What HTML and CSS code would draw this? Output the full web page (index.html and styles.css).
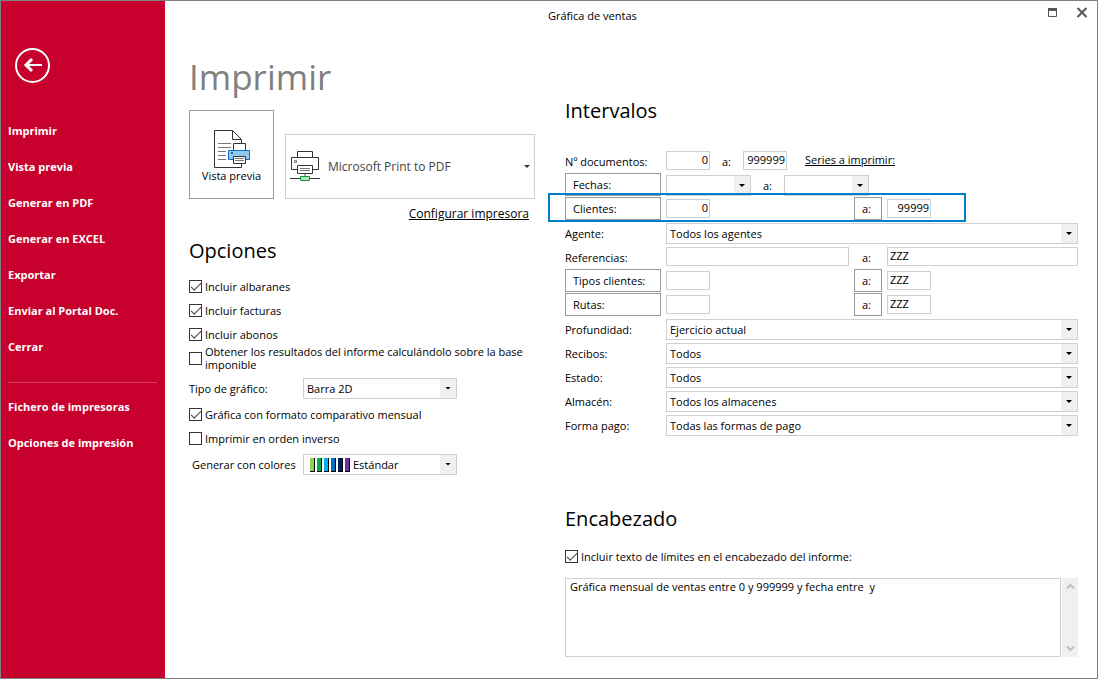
FILE: index.html
```html
<!DOCTYPE html>
<html lang="es">
<head>
<meta charset="utf-8">
<meta name="viewport" content="width=device-width, initial-scale=1">
<title>Gráfica de ventas</title>
<link rel="stylesheet" href="styles.css">
</head>
<body>
<div class="window">
  <nav class="sidebar" aria-label="Acciones">
    <button class="back" type="button" aria-label="Volver">
      <svg width="36" height="36" viewBox="0 0 36 36" fill="none" stroke="#fff"><circle cx="17.5" cy="18.5" r="16.5" stroke-width="2"/><path d="M27 18H11" stroke-width="2"/><path d="M17 12L11 18L17 24" stroke-width="3"/></svg>
    </button>
    <ul class="menu">
      <li><a href="#">Imprimir</a></li>
      <li><a href="#">Vista previa</a></li>
      <li><a href="#">Generar en PDF</a></li>
      <li><a href="#">Generar en EXCEL</a></li>
      <li><a href="#">Exportar</a></li>
      <li><a href="#">Enviar al Portal Doc.</a></li>
      <li><a href="#">Cerrar</a></li>
    </ul>
    <hr class="divider">
    <ul class="menu">
      <li><a href="#">Fichero de impresoras</a></li>
      <li><a href="#">Opciones de impresión</a></li>
    </ul>
  </nav>
  <main class="main">
    <header class="titlebar">
      <span class="caption">Gráfica de ventas</span>
      <button class="winbtn" type="button" aria-label="Maximizar"><svg width="12" height="12" viewBox="0 0 12 12"><path d="M2.500 2.500H10.500V9.500H2.500Z" fill="none" stroke="#555"/><path d="M2 1H11V4H2Z" fill="#555"/></svg></button>
      <button class="winbtn" type="button" aria-label="Cerrar ventana"><svg width="12" height="12" viewBox="0 0 12 12"><path d="M1.500 1L10.500 10M10.500 1L1.500 10" stroke="#555" stroke-width="2"/></svg></button>
    </header>
    <div class="columns">
      <div class="left">
        <h1>Imprimir</h1>
        <div class="print">
          <button class="preview" type="button">
            <svg width="36" height="38" viewBox="0 0 36 38" fill="none"><path d="M19 .5H.5V37.500H27.500V9.500L18.500 .5V9.500H27.500" stroke="#333" stroke-width="1"/><path d="M4 13.500H17M4 17.500H17M4 21.500H12M4 25.500H12M4 29.500H12" stroke="#777"/><path d="M19.500 20V13.500H31.500V20" fill="#fff" stroke="#333"/><path d="M14.500 20.500H35.500V29.500H14.500Z" fill="#92c9f0" stroke="#0f6cbd"/><path d="M17 22H19V24H17Z" fill="#0f6cbd"/><path d="M19.500 26.500H31.500V33.500H19.500Z" fill="#fff" stroke="#333"/><path d="M21 28.500H30M21 30.500H30" stroke="#777"/></svg>
            <span>Vista previa</span>
          </button>
          <span class="drop printer">
            <svg class="printer-icon" width="30" height="31" viewBox="0 0 30 31" fill="none"><path d="M7.500 6V.5H22.500V6" stroke="#333"/><path d="M7 18.500H1.500V6.500H28.500V18.500H23" stroke="#333"/><path d="M4.500 9.500H6.500V11.500H4.500Z" stroke="#777"/><path d="M7.500 14.500H22.500V22.500H7.500Z" stroke="#333"/><path d="M10 17.500H20M10 19.500H20" stroke="#777"/><path d="M15 23V25" stroke="#aaa" stroke-width="2"/><path d="M0 27.500H30" stroke="#333"/><path d="M10.500 25.500H19.500V29.500H10.500Z" fill="#b5e2b8" stroke="#0c9a3e"/></svg>
            <select aria-label="Impresora"><option>Microsoft Print to PDF</option></select>
          </span>
        </div>
        <a class="configure" href="#">Configurar impresora</a>
        <h2>Opciones</h2>
        <div class="options">
          <label class="check"><input type="checkbox" checked><span>Incluir albaranes</span></label>
          <label class="check"><input type="checkbox" checked><span>Incluir facturas</span></label>
          <label class="check"><input type="checkbox" checked><span>Incluir abonos</span></label>
          <label class="check"><input type="checkbox"><span>Obtener los resultados del informe calculándolo sobre la base imponible</span></label>
          <div class="choice spaced"><label for="tipo">Tipo de gráfico:</label><span class="drop"><select id="tipo"><option>Barra 2D</option></select></span></div>
          <label class="check"><input type="checkbox" checked><span>Gráfica con formato comparativo mensual</span></label>
          <label class="check"><input type="checkbox"><span>Imprimir en orden inverso</span></label>
          <div class="choice"><label class="inset" for="colores">Generar con colores</label><span class="drop colours">
            <svg class="swatches" width="41" height="15" viewBox="0 0 41 15"><path d="M1 1h5v14h-5zM8 1h5v14h-5zM15 1h5v14h-5zM22 1h5v14h-5zM29 1h5v14h-5zM36 1h5v14h-5z" fill="#000"/><path d="M1 1h4v13h-4z" fill="#92d050"/><path d="M8 1h4v13h-4z" fill="#00b050"/><path d="M15 1h4v13h-4z" fill="#00b0f0"/><path d="M22 1h4v13h-4z" fill="#0070c0"/><path d="M29 1h4v13h-4z" fill="#002060"/><path d="M36 1h4v13h-4z" fill="#7030a0"/></svg>
            <select id="colores"><option>Estándar</option></select></span></div>
        </div>
      </div>
      <div class="right">
        <h2>Intervalos</h2>
        <div class="ranges">
          <div class="line"><label for="doc1">Nº documentos:</label><input class="short num" id="doc1" value="0"><label class="to" for="doc2">a:</label><input class="short num" id="doc2" value="999999"><a class="series" href="#">Series a imprimir:</a></div>
          <div class="line"><button class="pick" type="button">Fechas:</button><span class="drop date"><select aria-label="Fecha inicial"><option></option></select></span><label class="to" for="fecha2">a:</label><span class="drop date"><select id="fecha2"><option></option></select></span></div>
          <div class="row highlight"><button class="pick" type="button">Clientes:</button><input class="short num" aria-label="Cliente inicial" value="0"><button class="pick until" type="button">a:</button><input class="short num" aria-label="Cliente final" value="99999"></div>
          <div class="row"><label for="agente">Agente:</label><span class="drop wide"><select id="agente"><option>Todos los agentes</option></select></span></div>
          <div class="row"><label for="ref1">Referencias:</label><input id="ref1"><label class="until" for="ref2">a:</label><input id="ref2" value="ZZZ"></div>
          <div class="row"><button class="pick" type="button">Tipos clientes:</button><input class="short" aria-label="Tipo inicial"><button class="pick until" type="button">a:</button><input class="short" aria-label="Tipo final" value="ZZZ"></div>
          <div class="row"><button class="pick" type="button">Rutas:</button><input class="short" aria-label="Ruta inicial"><button class="pick until" type="button">a:</button><input class="short" aria-label="Ruta final" value="ZZZ"></div>
          <div class="row"><label for="prof">Profundidad:</label><span class="drop wide"><select id="prof"><option>Ejercicio actual</option></select></span></div>
          <div class="row"><label for="rec">Recibos:</label><span class="drop wide"><select id="rec"><option>Todos</option></select></span></div>
          <div class="row"><label for="est">Estado:</label><span class="drop wide"><select id="est"><option>Todos</option></select></span></div>
          <div class="row"><label for="alm">Almacén:</label><span class="drop wide"><select id="alm"><option>Todos los almacenes</option></select></span></div>
          <div class="row"><label for="pago">Forma pago:</label><span class="drop wide"><select id="pago"><option>Todas las formas de pago</option></select></span></div>
        </div>
        <h2>Encabezado</h2>
        <label class="check"><input type="checkbox" checked><span>Incluir texto de límites en el encabezado del informe:</span></label>
        <div class="memo">
          <textarea aria-label="Texto del encabezado">Gráfica mensual de ventas entre 0 y 999999 y fecha entre  y</textarea>
          <div class="scroll">
            <svg width="9" height="7" viewBox="0 0 9 7" fill="none" stroke="#bfbfbf" stroke-width="2"><path d="M1 5.500L4.500 2L8 5.500"/></svg>
            <svg width="9" height="7" viewBox="0 0 9 7" fill="none" stroke="#bfbfbf" stroke-width="2"><path d="M1 1.500L4.500 5L8 1.500"/></svg>
          </div>
        </div>
      </div>
    </div>
  </main>
</div>
</body>
</html>
```
FILE: styles.css
```css
*, *::before, *::after { box-sizing: border-box; }
body, button, input, select, textarea {
  font-family: "Open Sans", "Noto Sans", sans-serif;
  font-size: 11px;
  color: #000;
}
body { margin: 0; background: #fff; line-height: 13px; }
button, input, select, textarea { margin: 0; border-radius: 0; }
a { color: inherit; }
svg { display: block; }

.window { display: flex; min-height: 100vh; border: 1px solid #808080; }

.sidebar { flex: none; width: 164px; padding: 46px 8px 0 7px; background: #c8002d; color: #fff; }
.back { display: block; margin: 0 0 30px 7px; padding: 0; border: 0; background: none; }
.menu { margin: 0; padding: 0; list-style: none; font-weight: 700; }
.menu a { display: block; line-height: 36px; text-decoration: none; white-space: nowrap; }
.divider { height: 1px; margin: 17px 0 6px; border: 0; background: #d84062; }

.main { flex: 1; min-width: 0; }
.titlebar { display: flex; align-items: center; gap: 18px; height: 28px; padding: 0 9px 4px 383px; }
.caption { flex: 1; padding-top: 4px; white-space: nowrap; }
.winbtn { padding: 0; border: 0; background: none; }

.columns { display: grid; grid-template-columns: 346px minmax(0, 1fr); gap: 30px; padding: 0 19px 20px 24px; }

h1 { margin: 20px 0 6px; font-size: 35px; font-weight: 400; line-height: 55px; color: #808080; }
h2 { margin: 0; font-size: 20px; font-weight: 400; line-height: 28px; }

.print { display: flex; align-items: flex-end; gap: 11px; }
.preview { display: flex; flex-direction: column; align-items: center; width: 85px; height: 89px; padding: 19px 0 0; border: 1px solid #999; background: #fff; white-space: nowrap; }
.configure { display: block; width: fit-content; margin: 7px 6px 15px auto; font-size: 12px; line-height: 16px; }

.drop { position: relative; display: block; height: 21px; }
.drop select { display: block; width: 100%; height: 100%; padding: 0 20px 0 3px; border: 1px solid #d0d0d0; background: #fff; appearance: none; }
.drop::before { content: ""; position: absolute; top: 1px; right: 1px; bottom: 1px; width: 16px; background: #f0f0f0; pointer-events: none; }
.drop::after { content: ""; position: absolute; top: 9px; right: 6px; width: 6px; height: 3px; background: #000; clip-path: polygon(0 0, 100% 0, 50% 100%); pointer-events: none; }
.printer { flex: 1; height: 65px; }
.printer select { padding-left: 42px; font-size: 12px; color: #444; }
.printer::before { display: none; }
.printer::after { top: 31px; right: 5px; background: #333; }
.printer-icon { position: absolute; top: 17px; left: 5px; pointer-events: none; }
.colours select { padding-left: 49px; }
.swatches { position: absolute; top: 3px; left: 6px; pointer-events: none; }

.check { display: flex; align-items: center; gap: 3px; height: 24px; }
.check input { position: relative; flex: none; width: 13px; height: 13px; border: 1px solid #333; background: #fff; appearance: none; }
.check input:checked::after { content: ""; position: absolute; top: 2px; left: 1px; width: 10px; height: 5px; border: solid #444; border-width: 0 0 1px 1px; transform: rotate(-45deg); }
.options { padding-top: 9px; }
.choice { display: grid; grid-template-columns: 114px 154px; align-items: center; height: 28px; }
.spaced { margin-top: 4px; }
.inset { padding-left: 3px; }

.right { padding-top: 68px; }
.ranges { padding: 24px 0 68px; }
.line, .row { height: 24px; align-items: start; column-gap: 5px; }
.line { display: flex; }
.line > label:first-child { width: 96px; }
.row { display: grid; grid-template-columns: 96px minmax(0, 183fr) 28px minmax(0, 191fr); }
.line label, .line a, .row label { padding-top: 2px; line-height: 22px; white-space: nowrap; }
.ranges input { width: 100%; height: 19px; margin-top: 2px; padding: 0 2px 2px; border: 1px solid #d0d0d0; }
.ranges .short { flex: none; width: 44px; }
.ranges .num { padding: 0 1px 2px; text-align: right; }
.ranges .drop { margin-top: 2px; }
.wide { grid-column: 2 / -1; }
.date { width: 85px; }
.line .to { width: 23px; padding-left: 7px; }
.line .series { margin-left: 13px; padding-top: 0; }
.pick { width: 96px; height: 23px; padding: 0 7px; border: 1px solid #999; background: #fff; text-align: left; }
.until { width: 28px; }
.row label.until { padding-left: 8px; }
.highlight { position: relative; z-index: 1; }
.highlight::after { content: ""; position: absolute; top: -4px; left: -17px; right: 112px; height: 29px; border: 2px solid #0080c8; pointer-events: none; }

.right > .check { margin-top: 11px; }
.memo { display: flex; gap: 1px; height: 79px; margin-top: 10px; }
.memo textarea { flex: 1; padding: 1px 4px; border: 1px solid #d0d0d0; line-height: 14px; resize: none; overflow: hidden; }
.scroll { display: flex; flex-direction: column; justify-content: space-between; align-items: center; width: 16px; padding: 5px 0; background: #f0f0f0; }
```
